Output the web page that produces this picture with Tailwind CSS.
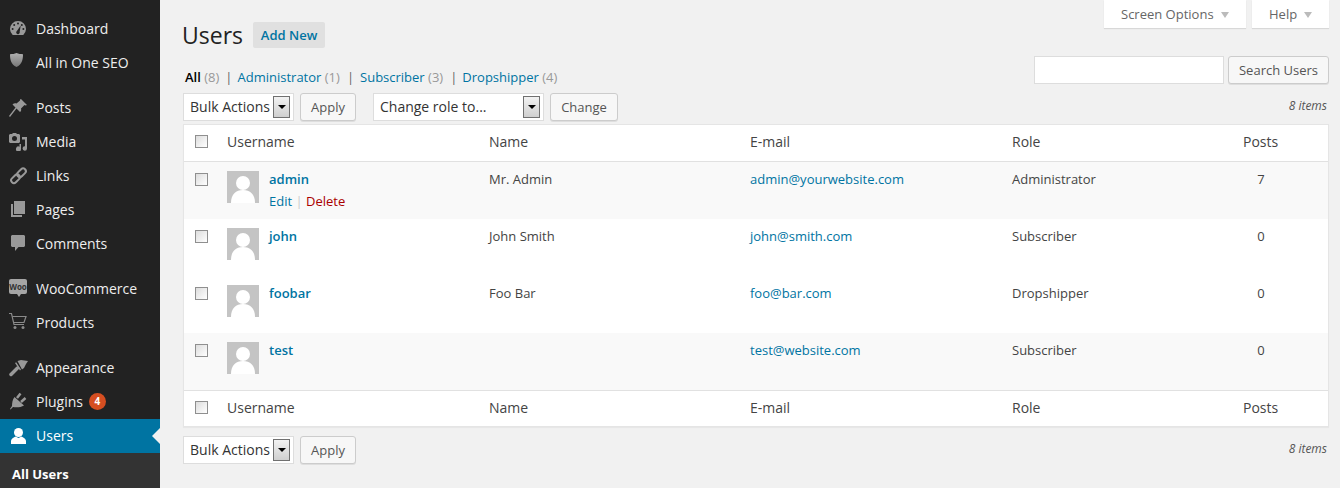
<!DOCTYPE html>
<html lang="en">
  <head>
    <meta charset="UTF-8" />
    <title>Users</title>
    <script src="https://cdn.jsdelivr.net/npm/@tailwindcss/browser@4"></script>
  </head>
  <body class="bg-[#f1f1f1] h-[488px] overflow-hidden font-['Open_Sans',sans-serif] text-[13px] text-[#444]">
    <div class="flex h-[488px]">
      <!-- Admin menu -->
      <nav class="w-[160px] shrink-0 bg-[#222] text-[14px] text-[#eee] pt-3">
        <a class="flex items-center h-[34px] pb-[2px]">
          <svg class="ml-[9px] w-[20px] h-[20px] text-[#999]" viewBox="0 0 20 20"><path fill="currentColor" d="M3.700 17A8 8 0 1 1 14.300 17z"/><g fill="#222"><circle cx="9" cy="5.500" r="1"/><circle cx="5.200" cy="7" r="1"/><circle cx="3.600" cy="11" r="1"/><circle cx="12.800" cy="7" r="1"/><circle cx="14.400" cy="11" r="1"/><path d="M11.700 7.500l-1 6.300a1.800 1.800 0 1 1-2.800-.9z"/></g></svg>
          <span class="ml-[7px]">Dashboard</span>
        </a>
        <a class="flex items-center h-[34px] pb-[2px]">
          <svg class="ml-[9px] w-[20px] h-[20px]" viewBox="0 0 20 20"><defs><linearGradient id="shield" x1="0" y1="0" x2="0" y2="1"><stop offset="0" stop-color="#b0b0b0"/><stop offset="1" stop-color="#777"/></linearGradient></defs><path fill="url(#shield)" d="M7.500 1c2 .8 4 1.200 6.500 1.200 0 5.500-1 10.300-6.500 12.800C2 12.500 1 7.700 1 2.200 3.500 2.200 5.500 1.800 7.500 1z"/></svg>
          <span class="ml-[7px]">All in One SEO</span>
        </a>
        <a class="flex items-center h-[34px] mt-[11px] pb-[2px]">
          <svg class="ml-[9px] w-[20px] h-[20px] text-[#999]" viewBox="0 0 20 20"><path fill="currentColor" d="M12 2l6 6-1.500.5-1-.5-3.500 3.500c.5 1.500 0 3-1 3.500L7.500 11.500 1 20l-1-1 6.500-8.500-3-3c1-1 2.500-1.500 4-1L11 3.500V2.500z"/></svg>
          <span class="ml-[7px]">Posts</span>
        </a>
        <a class="flex items-center h-[34px] pb-[2px]">
          <svg class="ml-[9px] w-[20px] h-[20px] text-[#999]" viewBox="0 0 20 20"><path fill="currentColor" fill-rule="evenodd" d="M1 3h2l1-1h3l1 1h2l1 1v7l-1 1H1l-1-1V4zM5.500 5a2.500 2.500 0 1 0 0 5 2.500 2.500 0 0 0 0-5z"/><path fill="currentColor" d="M13 6h5v11.500a2.200 2.200 0 1 1-2-2.200V8.500h-3zM10.500 13H12v5a2.500 2.500 0 1 1-1.500-2.300z"/></svg>
          <span class="ml-[7px]">Media</span>
        </a>
        <a class="flex items-center h-[34px] pb-[2px]">
          <svg class="ml-[9px] w-[20px] h-[20px] text-[#999]" viewBox="0 0 20 20"><g fill="none" stroke="currentColor" stroke-width="2"><rect x="7.500" y="5" width="10" height="5.500" rx="2.750" transform="rotate(-45 12.500 7.750)"/><rect x="1.500" y="11" width="10" height="5.500" rx="2.750" transform="rotate(-45 6.500 13.750)"/></g></svg>
          <span class="ml-[7px]">Links</span>
        </a>
        <a class="flex items-center h-[34px] pb-[2px]">
          <svg class="ml-[9px] w-[20px] h-[20px] text-[#999]" viewBox="0 0 20 20"><path fill="currentColor" d="M5 2h11v13H5zM2 5h2v11h9v2H2z"/></svg>
          <span class="ml-[7px]">Pages</span>
        </a>
        <a class="flex items-center h-[34px] pb-[2px]">
          <svg class="ml-[9px] w-[20px] h-[20px] text-[#999]" viewBox="0 0 20 20"><path fill="currentColor" d="M3 2h12l1 1v10l-1 1H9.500L6 18v-4H3l-1-1V3z"/></svg>
          <span class="ml-[7px]">Comments</span>
        </a>
        <a class="flex items-center h-[34px] mt-[11px] pb-[2px]">
          <span class="relative ml-[9px] mr-[2px] -mt-[3px] w-[18px] h-[15px] rounded-[2px] bg-[#a5a5a5] text-[#333] text-[8px] font-bold leading-[15px] text-center">Woo<span class="absolute left-[8px] top-[15px] border-x-[2px] border-t-[3px] border-x-transparent border-t-[#a5a5a5]"></span></span>
          <span class="ml-[7px]">WooCommerce</span>
        </a>
        <a class="flex items-center h-[34px] pb-[2px]">
          <svg class="ml-[9px] w-[20px] h-[20px] text-[#8a8a8a]" viewBox="0 0 20 20"><g fill="none" stroke="currentColor" stroke-width="1.200"><path d="M0 1.500h2.500l2.500 11h10"/><path d="M3.300 4.500h13.700l-2 6H4.700"/></g><circle cx="6" cy="15.500" r="1.500" fill="currentColor"/><circle cx="14" cy="15.500" r="1.500" fill="currentColor"/></svg>
          <span class="ml-[7px]">Products</span>
        </a>
        <a class="flex items-center h-[34px] mt-[11px] pb-[2px]">
          <svg class="ml-[9px] w-[20px] h-[20px] text-[#999]" viewBox="0 0 20 20"><path fill="currentColor" d="M8.500 4l3.500-1 7 1-2 3-2 4-2 1.500zM6 6l1.200-.8 4.800 7.300-1 1z"/><path fill="none" stroke="currentColor" stroke-width="3.500" stroke-linecap="round" d="M2 17.500L8.500 11"/></svg>
          <span class="ml-[7px]">Appearance</span>
        </a>
        <a class="flex items-center h-[34px] pb-[2px]">
          <svg class="ml-[9px] w-[20px] h-[20px] text-[#999]" viewBox="0 0 20 20"><path fill="currentColor" d="M5.500 6L15 14.500c-3 2-8 2-11 1.500l-2.500 2.500L1 18l2-3c0-3 .5-6.500 2.500-9z"/><path fill="none" stroke="currentColor" stroke-width="2.500" d="M8 7l3.500-4.500M12 11l4.500-4"/></svg>
          <span class="ml-[7px]">Plugins</span>
          <span class="ml-[6px] w-[17px] h-[17px] rounded-full bg-[#d54e21] text-white text-[10px] font-bold leading-[17px] text-center">4</span>
        </a>
        <a class="relative flex items-center h-[34px] pb-[2px] bg-[#0074a2] text-white">
          <svg class="ml-[9px] w-[20px] h-[20px] text-white" viewBox="0 0 20 20"><circle cx="9.500" cy="7.500" r="4.500" fill="currentColor"/><path fill="currentColor" d="M2 19v-3c0-2 2-3 4.500-4.500l3 1.500 3-1.500c2.500 1.500 4.500 2.500 4.500 4.500v3z"/></svg>
          <span class="ml-[7px]">Users</span>
          <span class="absolute right-0 top-[9px] border-y-[8px] border-r-[8px] border-y-transparent border-r-[#f1f1f1]"></span>
        </a>
        <div class="bg-[#333] h-[35px] pt-[11px] pl-[12px] text-[13px] font-bold text-white leading-[20px]">All Users</div>
      </nav>

      <!-- Content -->
      <main class="flex-1 min-w-0 relative pl-[23px] pr-[11px]">
        <div class="absolute top-0 right-[11px] flex gap-[6px] text-[#666]">
          <div class="flex items-center bg-white shadow-[0_1px_1px_rgba(0,0,0,0.1)] h-[28px] w-[142px] pl-[17px] pt-[2px]">
            Screen Options
            <span class="ml-[7px] border-x-[4px] border-t-[6px] border-x-transparent border-t-[#bbb]"></span>
          </div>
          <div class="flex items-center bg-white shadow-[0_1px_1px_rgba(0,0,0,0.1)] h-[28px] w-[77px] pl-[17px] pt-[2px]">
            Help
            <span class="ml-[7px] border-x-[4px] border-t-[6px] border-x-transparent border-t-[#bbb]"></span>
          </div>
        </div>

        <div class="flex items-center pt-[22px] h-[48px]">
          <h1 class="-ml-[1px] text-[23px] text-[#222] leading-[26px]">Users</h1>
          <a class="ml-[10px] h-[26px] w-[72px] rounded-[2px] bg-[#e0e0e0] text-[#0074a2] font-semibold leading-[26px] text-center">Add New</a>
        </div>

        <div class="flex items-start justify-between h-[45px]">
          <ul class="flex mt-[20px] ml-[2px] leading-[18px]">
            <li><b class="font-semibold text-black">All</b> <span class="text-[#999]">(8)</span><span class="text-[#666] ml-[6px] mr-[5px]">|</span></li>
            <li><a class="text-[#0074a2]">Administrator</a> <span class="text-[#999]">(1)</span><span class="text-[#666] ml-[7px] mr-[6px]">|</span></li>
            <li><a class="text-[#0074a2]">Subscriber</a> <span class="text-[#999]">(3)</span><span class="text-[#666] ml-[7px] mr-[5px]">|</span></li>
            <li><a class="text-[#0074a2]">Dropshipper</a> <span class="text-[#999]">(4)</span></li>
          </ul>
          <div class="flex gap-[4px] mt-[8px]">
            <div class="w-[190px] h-[28px] bg-white border border-[#ddd]"></div>
            <button class="w-[101px] h-[28px] pt-[2px] rounded-[3px] bg-[#f7f7f7] border border-[#ccc] shadow-[0_1px_0_rgba(0,0,0,0.08)] text-[#555]">Search Users</button>
          </div>
        </div>

        <div class="flex items-center h-[28px]">
          <div class="flex items-center w-[111px] h-[28px] bg-white border border-[#ddd] pl-[6px] text-[14px] text-[#333]">
            <span class="mb-[2px]">Bulk Actions</span>
            <span class="ml-auto mr-[3px] flex items-center justify-center w-[17px] h-[22px] border border-[#707070] bg-gradient-to-b from-[#f2f2f2] to-[#cfcfcf]"><span class="border-x-[4px] border-t-[4px] border-x-transparent border-t-black"></span></span>
          </div>
          <button class="ml-[6px] w-[56px] h-[28px] pt-[2px] rounded-[3px] bg-[#f7f7f7] border border-[#ccc] shadow-[0_1px_0_rgba(0,0,0,0.08)] text-[#555]">Apply</button>
          <div class="ml-[17px] flex items-center w-[171px] h-[28px] bg-white border border-[#ddd] pl-[6px] text-[14px] text-[#333]">
            <span class="mb-[2px]">Change role to...</span>
            <span class="ml-auto mr-[3px] flex items-center justify-center w-[17px] h-[22px] border border-[#707070] bg-gradient-to-b from-[#f2f2f2] to-[#cfcfcf]"><span class="border-x-[4px] border-t-[4px] border-x-transparent border-t-black"></span></span>
          </div>
          <button class="ml-[6px] w-[68px] h-[28px] pt-[2px] rounded-[3px] bg-[#f7f7f7] border border-[#ccc] shadow-[0_1px_0_rgba(0,0,0,0.08)] text-[#555]">Change</button>
          <span class="ml-auto mr-[2px] mb-[2px] text-[12px] italic text-[#555]">8 items</span>
        </div>

        <table class="mt-[3px] w-[1146px] table-fixed bg-white border border-[#e5e5e5] shadow-[0_1px_1px_rgba(0,0,0,0.04)] border-separate border-spacing-0">
          <colgroup>
            <col class="w-[43px]" /><col class="w-[262px]" /><col class="w-[261px]" /><col class="w-[262px]" /><col class="w-[190px]" /><col />
          </colgroup>
          <thead>
            <tr class="h-[37px] text-[14px] text-left">
              <th class="font-normal border-b border-[#e1e1e1] pl-[11px] pb-[3px]"><span class="block w-[13px] h-[13px] border border-[#8f8f8f] bg-gradient-to-br from-[#ddd] to-white"></span></th>
              <th class="font-normal border-b border-[#e1e1e1] pb-[3px]">Username</th>
              <th class="font-normal border-b border-[#e1e1e1] pb-[3px]">Name</th>
              <th class="font-normal border-b border-[#e1e1e1] pb-[3px]">E-mail</th>
              <th class="font-normal border-b border-[#e1e1e1] pb-[3px]">Role</th>
              <th class="font-normal border-b border-[#e1e1e1] pb-[3px] pl-[41px]">Posts</th>
            </tr>
          </thead>
          <tbody>
            <tr class="h-[57px] align-top bg-[#f9f9f9]">
              <td class="pl-[11px] pt-[11px]"><span class="block w-[13px] h-[13px] border border-[#8f8f8f] bg-gradient-to-br from-[#ddd] to-white"></span></td>
              <td class="pt-[9px]">
                <div class="flex">
                  <svg class="w-[32px] h-[32px] shrink-0" viewBox="0 0 32 32"><rect width="32" height="32" fill="#c4c4c4"/><circle cx="16" cy="12" r="7" fill="#fff"/><path fill="#fff" d="M4 32c0-9 5-13 12-13s12 4 12 13z"/></svg>
                  <div class="ml-[10px] -mt-[1px]">
                    <a class="block font-semibold text-[#0074a2] leading-[18px]">admin</a>
                    <div class="mt-[4px] leading-[18px]"><a class="text-[#0074a2]">Edit</a> <span class="text-[#ccc]">|</span> <a class="text-[#a00]">Delete</a></div>
                  </div>
                </div>
              </td>
              <td class="pt-[8px] leading-[18px]">Mr. Admin</td>
              <td class="pt-[8px] leading-[18px]"><a class="text-[#0074a2]">admin@yourwebsite.com</a></td>
              <td class="pt-[8px] leading-[18px]">Administrator</td>
              <td class="pt-[8px] pl-[41px] leading-[18px]"><span class="block w-[36px] text-center">7</span></td>
            </tr>
            <tr class="h-[57px] align-top">
              <td class="pl-[11px] pt-[11px]"><span class="block w-[13px] h-[13px] border border-[#8f8f8f] bg-gradient-to-br from-[#ddd] to-white"></span></td>
              <td class="pt-[9px]">
                <div class="flex">
                  <svg class="w-[32px] h-[32px] shrink-0" viewBox="0 0 32 32"><rect width="32" height="32" fill="#c4c4c4"/><circle cx="16" cy="12" r="7" fill="#fff"/><path fill="#fff" d="M4 32c0-9 5-13 12-13s12 4 12 13z"/></svg>
                  <a class="ml-[10px] -mt-[1px] font-semibold text-[#0074a2] leading-[18px]">john</a>
                </div>
              </td>
              <td class="pt-[8px] leading-[18px]">John Smith</td>
              <td class="pt-[8px] leading-[18px]"><a class="text-[#0074a2]">john@smith.com</a></td>
              <td class="pt-[8px] leading-[18px]">Subscriber</td>
              <td class="pt-[8px] pl-[41px] leading-[18px]"><span class="block w-[36px] text-center">0</span></td>
            </tr>
            <tr class="h-[57px] align-top">
              <td class="pl-[11px] pt-[11px]"><span class="block w-[13px] h-[13px] border border-[#8f8f8f] bg-gradient-to-br from-[#ddd] to-white"></span></td>
              <td class="pt-[9px]">
                <div class="flex">
                  <svg class="w-[32px] h-[32px] shrink-0" viewBox="0 0 32 32"><rect width="32" height="32" fill="#c4c4c4"/><circle cx="16" cy="12" r="7" fill="#fff"/><path fill="#fff" d="M4 32c0-9 5-13 12-13s12 4 12 13z"/></svg>
                  <a class="ml-[10px] -mt-[1px] font-semibold text-[#0074a2] leading-[18px]">foobar</a>
                </div>
              </td>
              <td class="pt-[8px] leading-[18px]">Foo Bar</td>
              <td class="pt-[8px] leading-[18px]"><a class="text-[#0074a2]">foo@bar.com</a></td>
              <td class="pt-[8px] leading-[18px]">Dropshipper</td>
              <td class="pt-[8px] pl-[41px] leading-[18px]"><span class="block w-[36px] text-center">0</span></td>
            </tr>
            <tr class="h-[57px] align-top bg-[#f9f9f9]">
              <td class="pl-[11px] pt-[11px]"><span class="block w-[13px] h-[13px] border border-[#8f8f8f] bg-gradient-to-br from-[#ddd] to-white"></span></td>
              <td class="pt-[9px]">
                <div class="flex">
                  <svg class="w-[32px] h-[32px] shrink-0" viewBox="0 0 32 32"><rect width="32" height="32" fill="#c4c4c4"/><circle cx="16" cy="12" r="7" fill="#fff"/><path fill="#fff" d="M4 32c0-9 5-13 12-13s12 4 12 13z"/></svg>
                  <a class="ml-[10px] -mt-[1px] font-semibold text-[#0074a2] leading-[18px]">test</a>
                </div>
              </td>
              <td class="pt-[8px] leading-[18px]"></td>
              <td class="pt-[8px] leading-[18px]"><a class="text-[#0074a2]">test@website.com</a></td>
              <td class="pt-[8px] leading-[18px]">Subscriber</td>
              <td class="pt-[8px] pl-[41px] leading-[18px]"><span class="block w-[36px] text-center">0</span></td>
            </tr>
          </tbody>
          <tfoot>
            <tr class="h-[36px] text-[14px] text-left">
              <th class="font-normal border-t border-[#e1e1e1] pl-[11px] pb-[3px]"><span class="block w-[13px] h-[13px] border border-[#8f8f8f] bg-gradient-to-br from-[#ddd] to-white"></span></th>
              <th class="font-normal border-t border-[#e1e1e1] pb-[3px]">Username</th>
              <th class="font-normal border-t border-[#e1e1e1] pb-[3px]">Name</th>
              <th class="font-normal border-t border-[#e1e1e1] pb-[3px]">E-mail</th>
              <th class="font-normal border-t border-[#e1e1e1] pb-[3px]">Role</th>
              <th class="font-normal border-t border-[#e1e1e1] pb-[3px] pl-[41px]">Posts</th>
            </tr>
          </tfoot>
        </table>

        <div class="flex items-center h-[28px] mt-[9px]">
          <div class="flex items-center w-[111px] h-[28px] bg-white border border-[#ddd] pl-[6px] text-[14px] text-[#333]">
            <span class="mb-[2px]">Bulk Actions</span>
            <span class="ml-auto mr-[3px] flex items-center justify-center w-[17px] h-[22px] border border-[#707070] bg-gradient-to-b from-[#f2f2f2] to-[#cfcfcf]"><span class="border-x-[4px] border-t-[4px] border-x-transparent border-t-black"></span></span>
          </div>
          <button class="ml-[6px] w-[56px] h-[28px] pt-[2px] rounded-[3px] bg-[#f7f7f7] border border-[#ccc] shadow-[0_1px_0_rgba(0,0,0,0.08)] text-[#555]">Apply</button>
          <span class="ml-auto mr-[2px] mb-[2px] text-[12px] italic text-[#555]">8 items</span>
        </div>
      </main>
    </div>
  </body>
</html>
